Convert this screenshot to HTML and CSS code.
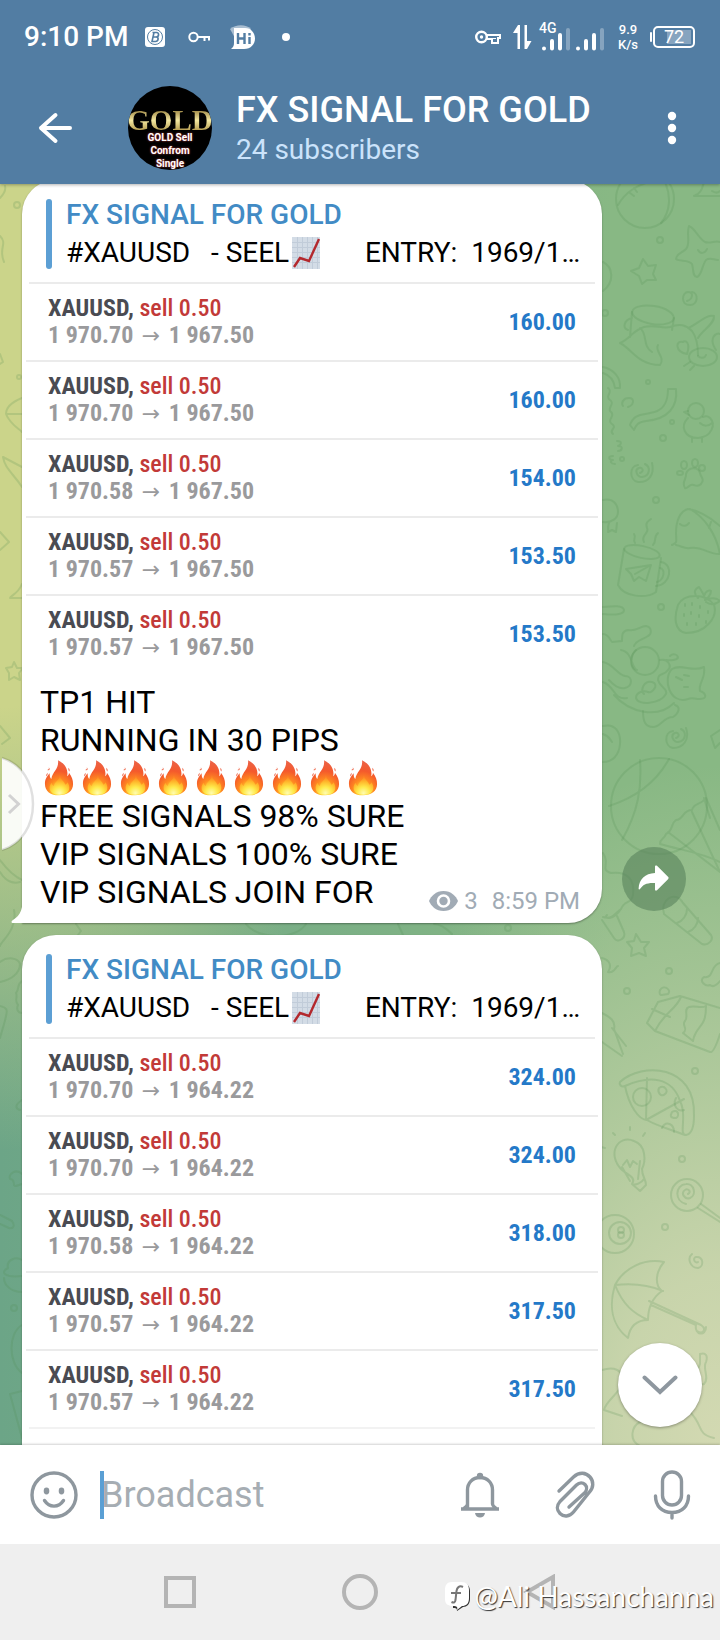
FILE: index.html
```html
<!DOCTYPE html>
<html lang="en">
<head>
<meta charset="utf-8">
<meta name="viewport" content="width=device-width, initial-scale=1">
<title>FX SIGNAL FOR GOLD</title>
<link rel="stylesheet" href="styles.css">
</head>
<body>
<svg class="defs" aria-hidden="true">
  <defs>
    <radialGradient id="fireBody" cx="50%" cy="92%" r="88%">
      <stop offset="0" stop-color="#fff36b"/><stop offset=".22" stop-color="#ffc92e"/><stop offset=".42" stop-color="#ff8a20"/><stop offset=".7" stop-color="#f4592c"/><stop offset="1" stop-color="#ec6347"/>
    </radialGradient>
    <radialGradient id="fireCore" cx="50%" cy="92%" r="80%">
      <stop offset="0" stop-color="#fffcb0"/><stop offset=".4" stop-color="#ffe94a"/><stop offset=".75" stop-color="#ffb52a"/><stop offset="1" stop-color="#ff8a24"/>
    </radialGradient>
    <symbol id="fire" viewBox="0 0 32 38">
      <path fill="url(#fireBody)" d="M15 0c6 3 10 8 10 14 0 1 0 2-.4 3 1.600-.6 2-2 2-3.500 3 4 4.400 7.500 4.400 12C31 33 25 37.500 16 37.500S1 33 1 25c0-5 2.500-8 5-11 0 3 .4 5 1.800 6C9 12 16 10 15 0z"/>
      <path fill="url(#fireCore)" d="M17 16c.5 5 4.500 6 5.500 10 1 0 2-1 2.500-2.500 1.600 2 2 4 2 6 0 5-4 7.300-10.500 7.300S6 34.500 6 29.500c0-2 .6-4 2-5.500.6 2 1.500 3 2.500 3.500 1-5 6-6 6.500-11.500z"/>
      <path fill="#ee6b4e" d="M3.500 10.500c2-1 2-2 1.500-3 2 2 1 4-1.500 3zM2.500 17.500c-.5-2 .5-3 1.500-4-.2 2-.3 3-1.500 4zM27 12c-1.200-1.500-1-2.500-1-4 1.500 1.500 1.700 2.600 1 4z"/>
    </symbol>
    <symbol id="chart" viewBox="0 0 28 32">
      <path fill="#d3dce6" d="M0 0h28v32H0z"/>
      <path stroke="#c1ccd9" fill="none" d="M0 5.500h28M0 10.500h28M0 15.500h28M0 20.500h28M0 25.500h28M5.500 0v32M10.500 0v32M15.500 0v32M20.500 0v32M25.500 0v32"/>
      <path stroke="#b3282d" stroke-width="2.400" fill="none" d="M2 30l6-9 9 3L27 2"/>
    </symbol>
  </defs>
</svg>
<div class="app">
  <header class="header">
    <div class="status">
      <div class="status-left">
        <span class="clock">9:10 PM</span>
        <svg class="st-b" width="20" height="20" viewBox="0 0 20 20"><rect width="20" height="20" rx="3" fill="#fff"/><circle cx="10" cy="10" r="7.500" fill="none" stroke="#527da3"/><path d="M9 5.500L7 14.500h3.500c3 0 3.500-4 1-4.500 3-.6 2.500-4.500 0-4.500H7.500M8 10h4" fill="none" stroke="#527da3" stroke-width="1.600"/></svg>
        <svg class="st-key" width="22" height="12" viewBox="0 0 22 12"><circle cx="5.500" cy="6" r="4.200" fill="none" stroke="#fff" stroke-width="2"/><path d="M10 6h11v3.500M16.500 6v4" fill="none" stroke="#fff" stroke-width="2"/></svg>
        <svg class="st-hi" width="26" height="24" viewBox="0 0 26 24"><path d="M0 4C6-1 16-1 21 4L10 22z" fill="#a9bed1"/><path d="M4 3h11c6 0 10 5 10 10.500S21 24 14 24H1c2-2 3-3 3-6z" fill="#fff"/><path d="M8 8v11M14.500 8v11M8 13.500h6.500M19.500 12v7M19.500 8v2.500" stroke="#527da3" stroke-width="2.400" fill="none"/></svg>
        <span class="st-dot"></span>
      </div>
      <div class="status-right">
        <svg width="26" height="14" viewBox="0 0 26 14"><circle cx="6.500" cy="7" r="5.300" fill="none" stroke="#fff" stroke-width="2.400"/><circle cx="6.500" cy="7" r="1.700" fill="#fff"/><path d="M12 5h13v3h-2v5h-6V9h-5" fill="none" stroke="#fff" stroke-width="2"/><path d="M17 8.500h4" stroke="#fff"/></svg>
        <svg class="st-arrows" width="19" height="24" viewBox="0 0 19 24"><path fill="#fff" d="M5 0h2v24H4.500V8H0zM11.500 0H14v16h4.500L14 24h-2.500z"/></svg>
        <span class="sig"><span class="net">4G</span><svg width="30" height="28" viewBox="0 0 30 28"><g stroke="#fff" stroke-width="4" stroke-linecap="round"><path d="M4 25.500v.1M12 18v7.500M20 12v13.500"/><path d="M28 7v18.500" opacity=".3"/></g></svg></span>
        <svg class="sig2" width="30" height="28" viewBox="0 0 30 28"><g stroke="#fff" stroke-width="4" stroke-linecap="round"><path d="M4 25.500v.1M12 18v7.500M20 12v13.500"/><path d="M28 7v18.500" opacity=".3"/></g></svg>
        <span class="speed">9.9<br>K/s</span>
        <span class="battery">72</span>
      </div>
    </div>
    <div class="bar">
      <button class="icon-btn back" aria-label="Back"><svg width="34" height="32" viewBox="0 0 34 32"><path d="M17.500 3L3 16l14.500 13M3 16h29" fill="none" stroke="#fff" stroke-width="4" stroke-linecap="round" stroke-linejoin="round"/></svg></button>
      <div class="avatar"><span class="gold">GOLD</span><span class="avatar-text">GOLD Sell<br>Confrom<br>Single</span></div>
      <div class="titles">
        <h1>FX SIGNAL FOR GOLD</h1>
        <p>24 subscribers</p>
      </div>
      <button class="icon-btn more" aria-label="More options"><svg width="10" height="34" viewBox="0 0 10 34"><g fill="#fff"><circle cx="5" cy="5" r="4.200"/><circle cx="5" cy="17" r="4.200"/><circle cx="5" cy="29" r="4.200"/></g></svg></button>
    </div>
  </header>

  <main class="chat">
    <svg class="wallpaper" viewBox="0 184 720 1262" preserveAspectRatio="xMaxYMin slice" aria-hidden="true">
      <g>
        <!-- right side -->
        <circle cx="645" cy="199" r="29"/><path d="M664 180c8 16 6 32-3 43M618 205c8-14 20-20 34-24M630 193l4 3M634 188l3 4"/>
        <path d="M694 196c6-2 8-6 10-14M694 196h26M712 191c3 2 6 2 8 0"/>
        <path d="M689 226c6 2 9 12 16 16 5 2 11-2 15 0M689 226c-3 8 2 18-3 23-4 4-10 5-10 10 4 3 12 0 16 5 2 6 0 12 5 13 5-2 5-12 9-17 4-3 8 0 12 0"/><path d="M698 250c2 4 7 4 9-1"/>
        <path d="M643 259l5 7 8-1-3 9 3 6-9 0-5 4-3-8-8-5 8-3z"/><circle cx="660" cy="240" r="3"/>
        <path d="M603 262c10 5 12 20 0 29"/><circle cx="605" cy="313" r="3"/>
        <path d="M687 301c6-2 7-9 1-9-6 0-8 13 2 13 8 0 9-12 2-13"/>
        <ellipse cx="653" cy="315" rx="21" ry="9" transform="rotate(9 653 315)"/><path d="M632 312l-2 25M674 318l-2 12M632 318c-8 2-10 10-4 12M620 343c10-4 12-12 24-16 10-3 18 2 26 0 10-4 16-2 22 4 6 8 6 18 6 24M620 343c12 6 18 22 40 22 6-8-6-14-2-20M640 328c8 6 2 18 12 24M688 328c10-4 18-14 26-12 1 8-12 14-16 22"/>
        <ellipse cx="703" cy="357" rx="14" ry="9"/><path d="M698 356c3 3 7 2 8-1M687 354c-12-2-12-14-4-12 2-2 8 0 4 12M716 350c-8-12 0-18 4-16M690 362l-6 4M694 366l-4 4"/>
        <path d="M603 367c10 2 18 10 17 21h-5c-1-9-6-13-12-15M608 388c6 4-4 8 2 12s-4 8 1 12-5 8 1 12-4 6 1 10M668 389h8c2 18-8 30-30 32-8 1-10 4-12 9l-4-5c4-12 14-10 20-12 16-2 18-14 18-24z"/>
        <path d="M628 407c6-2 7-9 1-9-6 0-8 5-6 8"/><circle cx="648" cy="382" r="2"/><circle cx="672" cy="422" r="2"/><circle cx="663" cy="438" r="3"/>
        <circle cx="696" cy="411" r="8"/><path d="M688 411l-4 1 5 3M688 418c-8 8-4 20 10 20 14-1 18-14 12-20-2-2-5-2-7-1M700 423c4 4 9 3 12 0M692 437v5M702 437v5"/>
        <path d="M617 441c6 0 4 4 1 5 6 0 4 5 0 5M613 456c-6 0-4 4 0 4-4 1-2 4 2 4"/><circle cx="622" cy="459" r="2"/>
        <path d="M640 473c5-2 2-6-1-5-5 2-2 9 3 9 8-1 9-10 3-13M652 463c3 12-4 20-14 19-9-2-9-16 0-17"/>
        <path d="M685 488c-4-6 2-9 1-14 2-7 12-8 14-1 1 5 5 6 1 11-4 4-6 0-10 1-3 1-4 4-6 3z"/><ellipse cx="684" cy="465" rx="3" ry="4"/><ellipse cx="695" cy="463" rx="3" ry="4"/><ellipse cx="702" cy="468" rx="3" ry="3"/><ellipse cx="680" cy="473" rx="3" ry="2"/>
        <circle cx="656" cy="500" r="3"/><path d="M603 500c10-2 15 4 15 12 0 6-6 11-15 10M609 523c-2 6 0 8-1 9l4-2 4 2 1-9"/>
        <path d="M672 545c6-3 4-3 4-12 0-12 4-22 12-24 14 2 24 10 32 17M690 509c14 8 26 24 30 45-10 1-18-8-30-6-6 1-8-2-14-3M680 524c3 3 7 2 9-1M711 522l-2 6"/>
        <path d="M624 549l-6 36c6 12 28 14 38 7l5-34"/><ellipse cx="642" cy="552" rx="18" ry="6" transform="rotate(12 642 552)"/><path d="M661 562c13 2 10 23-5 24M660 568c6 1 4 12-3 14M626 569l25-4-5 16-7-4-5 4-3-7zM651 565l-16 9M644 542c-4-7 6-9 3-14-2-5 1-7 4-9M635 543c-3-4 2-5-1-9M653 545c4-4 0-8 5-12"/>
        <path d="M678 605c6-12 28-12 36 0 4 12-8 28-28 28-12-2-12-16-8-28zM698 598c-6-6-2-10 1-11 2 3 4 6 5 9 2-6 6-6 7-5 0 4-4 8-6 9 6-3 12-2 15 1-5 4-10 4-14 1"/><path d="M685 604v2M692 603v2M700 606v2M684 614v2M691 612v2M699 615v2M708 611v2M687 623v2M696 623v2M706 621v2"/><circle cx="661" cy="607" r="3"/>
        <path d="M603 607c10-1 20-2 21 3 0 5-10 5-21 4M603 634c6 0 8 8 9 8l10-1c0-6 0-10 6-11 8 2 12-4 18-4 6 1 6 8 2 10-6 4-12 4-14 10"/><circle cx="645" cy="661" r="14"/><path d="M621 650c12 2 10 18 16 20-8-2-6-16-1-20M660 660c8-2 12 6 8 10-4 6-10 2-10 10 2 8 10 8 8 14-6 10-28 12-30 4 0-6 8-8 12-6s12-8 4-10-12 8-8 12M666 660c20 2 10-10 4-4M603 662c10 2 14 12 22 14 8 0 8 10 0 12-8 2-14-6-16-8M603 682c12 4 10 18 24 16M614 695c16 18 44 24 60 8"/>
        <path d="M672 669c10-6 20 4 32-2 2 12-6 16-4 24 6 2 8 8 0 8-6 0-8-2-12 0-18 6-26-20-16-30zM676 677l6 3M684 675l5 1M684 687h4M643 711c0 10 2 16 10 16s10-10 20-10c6-4 8-10 2-12"/>
        <path d="M603 726c12-3 18 6 17 18-1 12-8 18-17 18M603 734c6 2 6 4 9 8M676 738c5-2 2-6-1-5-5 2-2 9 3 9 8-1 9-10 3-13M686 728c4 12-3 20-13 20-9-2-9-16 0-17M720 730l-9 6 4 12 5-5"/>
        <circle cx="659" cy="806" r="48"/><path d="M640 760c2 28-2 52-18 80M669 759c-12 22-32 38-60 47M706 798c-6 8-12 4-14 12-10 0-8 10-16 10-6 4-2 10-10 14-2 6-6 4-6 10M706 798l14 32M710 818l-6-20M692 812l28 60M668 832l52 40M660 844c20 6 40 8 60 18"/>
        <path d="M603 853c8 12-4 16 8 20 16-2 24 6 22 22-2 10-8 4-12 14-8 12-18 10-14 6M603 917c10 3 12-4 18-8M602 920l12 18c4 6 12 0 10-6l-7-16M636 934l5 8 8 0-5 6 2 8-7-3-8 3 1-8-5-6 7-1z"/>
        <path d="M664 914l38 30c6 2 12-4 9-9l-28-32c-8-14-24-2-19 11zM677 923c6-2 10-8 10-14M688 932c6-2 10-8 10-14"/>
        <path d="M720 963c-10 2-6 16-16 14-6 4 2 10 6 8 4 4 10-4 10-4M602 958c8 2 10 8 6 14 6 2 8-6 10-6"/><circle cx="669" cy="971" r="3"/><circle cx="627" cy="991" r="3"/>
        <path d="M658 1002l22-6 40 12M658 1002l-11 21 8 8 55 21c4 1 8-12 10-18M655 1031c10-20 20-20 26-34M706 1006c0 24-10 18-13 35l-10-8c6-4-2-8 2-12s-2-12 4-14 12 2 17-1M652 1009l18 8M660 990c4-6 12 0 8 4-4 0-10 4-8-4M602 1013c8 4 14 8 12 16l9 25M602 1042l20 14M612 1028l14 18"/>
        <path d="M620 1082c22-20 76-18 74 34 0 10-2 18-8 19-8 0 2-20-6-34-8-24-30-26-55-15-4 2-6-2-5-4zM625 1086c4 20 14 34 22 34 10 6 20 8 38 15M647 1078l-1 42 38-21"/><circle cx="642" cy="1097" r="9"/><path d="M659 1088c6-4 10 4 6 6-4 4-8-2-6-6zM672 1112c6-4 8 4 4 6-6 0-6-2-4-6M676 1098c-4 8 2 14 8 12M662 1128c4-8 12-4 12 4"/><circle cx="695" cy="1071" r="3"/>
        <path d="M632 1184c4-6-2-8-10-14-16-16-4-36 12-29 12 4 12 20 8 28 0 8 4 10 4 16l-6 6zM632 1184c4 2 10-2 12-5M622 1167l8 14M640 1161l-2 18M623 1165l4-5 3 7 3-6 4 3M605 1148l-4-1M615 1135l-2-2M630 1130v-3M643 1136l2-3"/><circle cx="682" cy="1159" r="3"/>
        <circle cx="687" cy="1195" r="16"/><path d="M688 1194c4-2 0-6-3-4-5 3 0 10 5 8 7-3 4-15-4-14-11 1-12 17 0 20M701 1204l19 14M698 1208l22 14"/>
        <circle cx="615" cy="1234" r="19"/><circle cx="620" cy="1233" r="11"/><circle cx="621" cy="1230" r="3"/><circle cx="621" cy="1235" r="3"/><circle cx="665" cy="1227" r="3"/>
        <path d="M698 1262c-3 2-6-4-2-5 8-1 8 10 2 11-8 0-11-10-6-14M664 1262c-20-4-40 6-49 23-6 20-4 40 13 53 2-12 8-18 20-18 0-12 4-22 14-29-8-6-6-20 2-29zM615 1285c18-2 34 0 48 6M615 1285c8 20 18 28 33 35M649 1301l52 24c6 4 2 10-4 6M651 1305l45 20c-2 10 10 12 10 2"/>
        <path d="M602 1370c12-4 20 0 22 10-4 14-18 20-20 30l18 6M700 1354c6-2 8 2 6 8-4 6 4 16-2 22-8 2-8-12-4-20zM690 1412c14 14 6 22 24 26M640 1446c-12-6-8-20 0-24"/>
        <!-- left edge -->
        <path d="M0 198c4-4 6-8 5-12M0 236c8 8-2 12 4 26M0 354l3 8-3 2M22 398c-10 4-16 10-16 16 4 10 12 14 16 18M6 414h16M3 457l19 10M3 457c2 12 10 16 19 30M0 532l9 10-9 8M22 584c-4 10-12 12-12 14h12M14 662l3 6 6 0-4 5 1 7-6-3-5 3 0-7-3-5 6-1zM0 726l10 12-8 6M0 860c6 8 14 16 22 20M0 872c6 10 14 12 20 10M14 910c4 20-14 32-14 36M0 962c8-6 18-4 20 2 0 10-10 16-20 18M0 1006c10 2 8 4 0 32M22 981c-6 4-2 8-6 12 2 4-2 8 2 12-2 4 0 8 4 8"/><circle cx="17" cy="205" r="3"/><circle cx="19" cy="377" r="2"/>
        <path d="M22 1100c-6 4-8 8-2 10M22 1174c-6-6-14 0-12 5 6 0 2 8 6 7l6-2M0 1215l12 6c4 6 0 8-3 7l-9-4M22 1260c-6-4-16 0-14 8-8 4-4 10 14 8M4 1278c0 8 8 14 18 14M22 1325c-14 8-14 38 0 48M10 1394l12-3M10 1394l12 44"/><circle cx="14" cy="1308" r="3"/>
        <path d="M76 924l5 7-3 4M246 924c12 16 50 16 60 0M398 924l5 11M434 924c8 0 14 6 18 10"/><circle cx="508" cy="928" r="3"/>
      </g>
    </svg>

    <article class="message">
      <div class="bubble tailed">
        <svg class="tail" width="12" height="30" viewBox="0 0 12 30" aria-hidden="true"><path fill="#fff" d="M12 0c0 16-2 22-10 27-2 1-2 3 0 3h10z"/></svg>
        <div class="quote"><div class="quote-body"><h2>FX SIGNAL FOR GOLD</h2><p>#XAUUSD   - SEEL<svg class="emoji-chart" role="img" aria-label="chart increasing"><use href="#chart"/></svg>      ENTRY:  1969/1…</p></div></div>
        <ul class="trades">
          <li><div><p class="pair"><b>XAUUSD,</b> sell 0.50</p><p class="move">1 970.70 <i>→</i> 1 967.50</p></div><span class="profit">160.00</span></li>
          <li><div><p class="pair"><b>XAUUSD,</b> sell 0.50</p><p class="move">1 970.70 <i>→</i> 1 967.50</p></div><span class="profit">160.00</span></li>
          <li><div><p class="pair"><b>XAUUSD,</b> sell 0.50</p><p class="move">1 970.58 <i>→</i> 1 967.50</p></div><span class="profit">154.00</span></li>
          <li><div><p class="pair"><b>XAUUSD,</b> sell 0.50</p><p class="move">1 970.57 <i>→</i> 1 967.50</p></div><span class="profit">153.50</span></li>
          <li><div><p class="pair"><b>XAUUSD,</b> sell 0.50</p><p class="move">1 970.57 <i>→</i> 1 967.50</p></div><span class="profit">153.50</span></li>
        </ul>
        <div class="caption">
          <div class="caption-text">
            <p>TP1 HIT</p>
            <p>RUNNING IN 30 PIPS</p>
            <p class="fires" role="img" aria-label="nine fire emoji"><svg><use href="#fire"/></svg><svg><use href="#fire"/></svg><svg><use href="#fire"/></svg><svg><use href="#fire"/></svg><svg><use href="#fire"/></svg><svg><use href="#fire"/></svg><svg><use href="#fire"/></svg><svg><use href="#fire"/></svg><svg><use href="#fire"/></svg></p>
            <p>FREE SIGNALS 98% SURE</p>
            <p>VIP SIGNALS 100% SURE</p>
            <p>VIP SIGNALS JOIN FOR</p>
          </div>
          <div class="meta"><svg width="29" height="20" viewBox="0 0 29 20" aria-hidden="true"><path fill="#a1abb5" d="M14.500 0C22 0 27 5 29 10c-2 5-7 10-14.500 10S2 15 0 10C2 5 7 0 14.500 0z"/><circle cx="14.500" cy="10" r="5.500" fill="none" stroke="#fff" stroke-width="2.600"/></svg><span>3</span><time>8:59 PM</time></div>
        </div>
      </div>
      <div class="side"><button class="share" aria-label="Share"><svg width="32" height="28" viewBox="0 0 32 28"><path fill="#fff" d="M17 1.500c0-1 1-1.500 2-.7l11 11c.8.8.8 1.600 0 2.400l-11 11c-1 .9-2 .4-2-.6V18C9 17.500 5 19.500 2 24c-.5.700-1.500.4-1.400-.5C1 14.500 7 8.500 17 8z"/></svg></button></div>
    </article>

    <article class="message">
      <div class="bubble">
        <div class="quote"><div class="quote-body"><h2>FX SIGNAL FOR GOLD</h2><p>#XAUUSD   - SEEL<svg class="emoji-chart" role="img" aria-label="chart increasing"><use href="#chart"/></svg>      ENTRY:  1969/1…</p></div></div>
        <ul class="trades closed">
          <li><div><p class="pair"><b>XAUUSD,</b> sell 0.50</p><p class="move">1 970.70 <i>→</i> 1 964.22</p></div><span class="profit">324.00</span></li>
          <li><div><p class="pair"><b>XAUUSD,</b> sell 0.50</p><p class="move">1 970.70 <i>→</i> 1 964.22</p></div><span class="profit">324.00</span></li>
          <li><div><p class="pair"><b>XAUUSD,</b> sell 0.50</p><p class="move">1 970.58 <i>→</i> 1 964.22</p></div><span class="profit">318.00</span></li>
          <li><div><p class="pair"><b>XAUUSD,</b> sell 0.50</p><p class="move">1 970.57 <i>→</i> 1 964.22</p></div><span class="profit">317.50</span></li>
          <li><div><p class="pair"><b>XAUUSD,</b> sell 0.50</p><p class="move">1 970.57 <i>→</i> 1 964.22</p></div><span class="profit">317.50</span></li>
        </ul>
      </div>
      <div class="side"></div>
    </article>

    <button class="drawer" aria-label="Open side panel"><svg width="34" height="96" viewBox="0 0 34 96"><path d="M0 2C20 8 31 27 31 48S20 88 0 94z" fill="#fff" fill-opacity=".92"/><path d="M0 2C20 8 31 27 31 48S20 88 0 94" fill="none" stroke="#000" stroke-opacity=".12" stroke-width="2.500"/><path d="M7 39l9.500 9L7 57" fill="none" stroke="#d2d2d2" stroke-width="3"/></svg></button>
    <button class="to-bottom" aria-label="Scroll to bottom"><svg width="36" height="20" viewBox="0 0 36 20"><path d="M2.500 2.500L18 17 33.500 2.500" fill="none" stroke="#8e979f" stroke-width="4" stroke-linecap="round"/></svg></button>
  </main>

  <form class="composer">
    <button type="button" class="icon-btn smile" aria-label="Emoji"><svg width="48" height="48" viewBox="0 0 48 48"><circle cx="24" cy="24" r="22" fill="none" stroke="#8e979e" stroke-width="3.400"/><ellipse cx="16.500" cy="20" rx="2.800" ry="3.400" fill="#8e979e"/><ellipse cx="31.500" cy="20" rx="2.800" ry="3.400" fill="#8e979e"/><path d="M14.500 29.500c5 7.500 14 7.500 19 0" fill="none" stroke="#8e979e" stroke-width="3.400" stroke-linecap="round"/></svg></button>
    <input type="text" placeholder="Broadcast" aria-label="Broadcast">
    <button type="button" class="icon-btn tool" aria-label="Notifications"><svg width="38" height="46" viewBox="0 0 38 46"><path d="M0 37h38M6.500 36V18c0-7 5-12.500 12.500-12.500S31.500 11 31.500 18v14c0 2 2 3 4 5M6.500 32c0 2-2 3-4 5" fill="none" stroke="#8e979e" stroke-width="3.400"/><circle cx="19" cy="4" r="3.200" fill="#8e979e"/><path d="M14 41h10c-.5 3-2.500 4.500-5 4.500S14.500 44 14 41z" fill="#8e979e"/></svg></button>
    <button type="button" class="icon-btn tool" aria-label="Attach"><svg width="42" height="48" viewBox="0 0 42 48"><path d="M4 20L18.500 6c6-5.500 12.500-4.500 16.500 0s3.500 11-.5 15L18.500 41c-4 5-10 5-13.500 1.500s-3.500-8 0-12L21.500 14c3-3 6.500-2.500 8.500-.5s2 5.500 0 8L14 36" fill="none" stroke="#8e979e" stroke-width="3.400" stroke-linecap="round" stroke-linejoin="round"/></svg></button>
    <button type="button" class="icon-btn tool" aria-label="Record voice"><svg width="38" height="50" viewBox="0 0 38 50"><rect x="9.500" y="2" width="19" height="33" rx="9.500" fill="none" stroke="#8e979e" stroke-width="3.400"/><path d="M2.500 26c0 10 6.500 16.500 16.500 16.500S35.500 36 35.500 26M19 42.500V48" fill="none" stroke="#8e979e" stroke-width="3.400" stroke-linecap="round"/></svg></button>
  </form>

  <nav class="navbar">
    <button aria-label="Recent apps"><svg width="36" height="36" viewBox="0 0 36 36"><rect x="4" y="4" width="28" height="28" fill="none" stroke="#b4b4b4" stroke-width="4"/></svg></button>
    <button aria-label="Home"><svg width="36" height="36" viewBox="0 0 36 36"><circle cx="18" cy="18" r="16" fill="none" stroke="#b4b4b4" stroke-width="4"/></svg></button>
    <button aria-label="Back"><svg width="36" height="36" viewBox="0 0 36 36"><path d="M31 3v30L5 18z" fill="none" stroke="#b4b4b4" stroke-width="4"/></svg></button>
    <div class="watermark"><svg width="26" height="30" viewBox="0 0 26 30" aria-hidden="true"><path d="M9 2h9c5 0 8 3 8 8v8c0 5-3 8-7 8l-6 4c0-3-1-3-4-3" fill="#333"/><path d="M8 1h9c6 0 8 3 8 8v8c0 6-3 8-7 8l-5 4c1-3 0-4-4-4-5 0-8-2-8-7V9c0-5 2-8 7-8z" fill="#fff"/><path d="M19 6c-4-2-6 1-6.500 4L11.500 19c-.5 3-2 3-4 2M7 12h10" fill="none" stroke="#777" stroke-width="2"/></svg><span>@Ali Hassanchanna</span></div>
  </nav>
</div>
</body>
</html>
```
FILE: styles.css
```css
* { box-sizing: border-box; margin: 0; padding: 0; }
body { font-family: Roboto, "Liberation Sans", sans-serif; background: #fff; }
button { border: 0; background: none; font: inherit; cursor: pointer; }
svg { display: block; flex: none; }
.defs { position: absolute; width: 0; height: 0; }
.app { display: flex; flex-direction: column; height: 100vh; }

/* header */
.header { position: relative; z-index: 2; background: #527da3; color: #fff; box-shadow: 0 1px 3px rgba(0, 0, 0, .3); }
.status { display: flex; justify-content: space-between; align-items: center; height: 72px; padding: 2px 25px 0 24px; }
.status-left, .status-right { display: flex; align-items: center; }
.clock { font-size: 28px; font-weight: 500; line-height: 32px; }
.st-b { margin-left: 17px; }
.st-key { margin-left: 23px; }
.st-hi { margin-left: 20px; }
.st-dot { width: 8px; height: 8px; margin-left: 26px; border-radius: 50%; background: #fff; }
.st-arrows { margin-left: 12px; }
.sig { position: relative; margin-left: 8px; }
.net { position: absolute; left: -1px; top: -2px; font-size: 14px; font-weight: 500; line-height: 14px; }
.sig2 { margin-left: 4px; }
.speed { margin-left: 14px; font-size: 13px; font-weight: 500; line-height: 15px; text-align: center; }
.battery { position: relative; width: 42px; height: 22px; margin-left: 15px; border: 2px solid #fff; border-radius: 5px; background: linear-gradient(#86a4bf, #86a4bf) right 2px center / 24px 14px no-repeat; font-size: 18px; line-height: 18px; text-align: center; }
.battery::before { content: ""; position: absolute; left: -5px; top: 4px; width: 2px; height: 10px; border-radius: 2px; background: #fff; }
.bar { display: flex; align-items: center; height: 112px; }
.icon-btn { display: flex; align-items: center; justify-content: center; flex: none; }
.back { width: 110px; height: 96px; }
.avatar { display: flex; flex-direction: column; align-items: center; width: 84px; height: 84px; margin-left: 18px; padding-top: 22px; border-radius: 50%; background: #000; overflow: hidden; }
.gold { font: bold 29px/25px "Liberation Serif", serif; background: linear-gradient(#8d7433, #f3e7a0 50%, #a68a3c); background-clip: text; -webkit-background-clip: text; color: transparent; }
.avatar-text { font-size: 10px; font-weight: 700; line-height: 13px; margin-top: -2px; text-align: center; color: #fff; text-shadow: 0 0 2px #e04848; }
.titles { flex: 1; min-width: 0; margin-left: 24px; padding-top: 2px; white-space: nowrap; }
.titles h1 { font-size: 36px; font-weight: 500; line-height: 42px; }
.titles p { font-size: 28px; line-height: 38px; color: #cbe3fb; }
.more { width: 96px; height: 96px; }

/* conversation */
.chat { position: relative; flex: 1; min-height: 0; overflow: hidden;
  background:
    radial-gradient(ellipse 420px 680px at 100% 100%, #d3d9b2, rgba(211, 217, 178, .85) 25%, rgba(211, 217, 178, 0)),
    radial-gradient(ellipse 400px 740px at 0 18%, #cbd48a, #cbd48a 40%, rgba(203, 212, 138, 0)),
    linear-gradient(to right, #6ca587, #88b884 85%); }
.wallpaper { position: absolute; left: 0; top: 0; width: 100%; height: 100%; }
.wallpaper g { fill: none; stroke: #4f8a4f; stroke-opacity: .2; stroke-width: 2; stroke-linejoin: round; stroke-linecap: round; }
.message { position: relative; display: flex; align-items: flex-end; margin: -4px 0 16px; padding-left: 22px; }
.bubble { position: relative; flex: 1; min-width: 0; padding: 16px 4px 12px; border-radius: 34px; background: #fff; box-shadow: 0 1px 2px rgba(0, 0, 0, .35); }
.tailed { border-bottom-left-radius: 0; }
.tail { position: absolute; left: -11px; bottom: 0; }
.quote { display: flex; align-items: center; margin: 0 16px 10px 20px; }
.quote::before { content: ""; width: 6px; height: 70px; border-radius: 3px; background: #5c9fd4; }
.quote-body { margin-left: 14px; font-size: 28px; line-height: 38px; white-space: nowrap; }
.quote-body h2 { font-size: 28px; font-weight: 500; color: #428bc5; }
.quote-body p { display: flex; align-items: center; white-space: pre; color: #000; }
.emoji-chart { width: 28px; height: 32px; margin: 0 3px; }
.trades { list-style: none; font-family: "Roboto Condensed", "Liberation Sans Narrow", Roboto, sans-serif; font-size: 24px; }
.trades li { display: flex; align-items: center; justify-content: space-between; height: 78px; padding: 0 22px; border-top: 2px solid #ebebeb; }
.trades li:first-child { margin: 0 3px; padding: 0 19px; }
.closed::after { content: ""; display: block; height: 60px; margin: 0 3px; border-top: 2px solid #f2f2f2; }
.pair, .move { line-height: 27px; white-space: nowrap; }
.pair { font-weight: 500; color: #c23a38; }
.pair b { color: #4a4b52; }
.move { font-weight: 700; color: #9a9a9c; }
.move i { margin: 0 3px; font: 22px/20px "DejaVu Sans", sans-serif; }
.profit { font-weight: 700; color: #2479c8; }
.caption { display: flex; justify-content: space-between; align-items: flex-end; margin: 11px 18px 0 14px; }
.caption-text { font-size: 32px; line-height: 38px; white-space: nowrap; color: #000; }
.fires { display: flex; height: 38px; }
.fires svg { width: 30px; height: 38px; margin: 0 4px; }
.meta { display: flex; align-items: center; height: 28px; margin-bottom: -4px; font-size: 24px; color: #a1abb5; white-space: nowrap; }
.meta span { margin: 0 14px 0 6px; }
.side { display: flex; justify-content: flex-end; width: 118px; padding: 0 34px 12px 0; }
.share { display: flex; align-items: center; justify-content: center; width: 64px; height: 64px; border-radius: 50%; background: rgba(88, 130, 92, .6); }
.drawer { position: absolute; left: 2px; top: 572px; }
.to-bottom { position: absolute; right: 18px; bottom: 18px; display: flex; align-items: center; justify-content: center; width: 84px; height: 84px; border-radius: 50%; background: #fff; box-shadow: 0 1px 3px rgba(0, 0, 0, .35); }

/* composer */
.composer { position: relative; display: flex; align-items: center; height: 99px; background: #fff; box-shadow: 0 -1px 2px rgba(0, 0, 0, .18); }
.smile { width: 60px; height: 96px; margin: 0 16px 0 24px; }
.composer input { flex: 1; min-width: 0; height: 48px; border: 0; border-left: 4px solid #5a9fd4; outline: 0; background: none; font: 36px/48px Roboto, sans-serif; text-indent: -3px; color: #000; }
.composer input::placeholder { color: #a6adb3; opacity: 1; }
.tool { width: 96px; height: 96px; }

/* system navigation */
.navbar { position: relative; display: flex; height: 96px; padding: 0 12.5%; background: #efefef; }
.navbar button { display: flex; flex: 1; align-items: center; justify-content: center; }
.watermark { position: absolute; right: 6px; bottom: 26px; display: flex; align-items: center; gap: 4px; font: 28px/36px Lato, sans-serif; color: #fff; text-shadow: 1px 1px 1px #333; white-space: nowrap; }
```
